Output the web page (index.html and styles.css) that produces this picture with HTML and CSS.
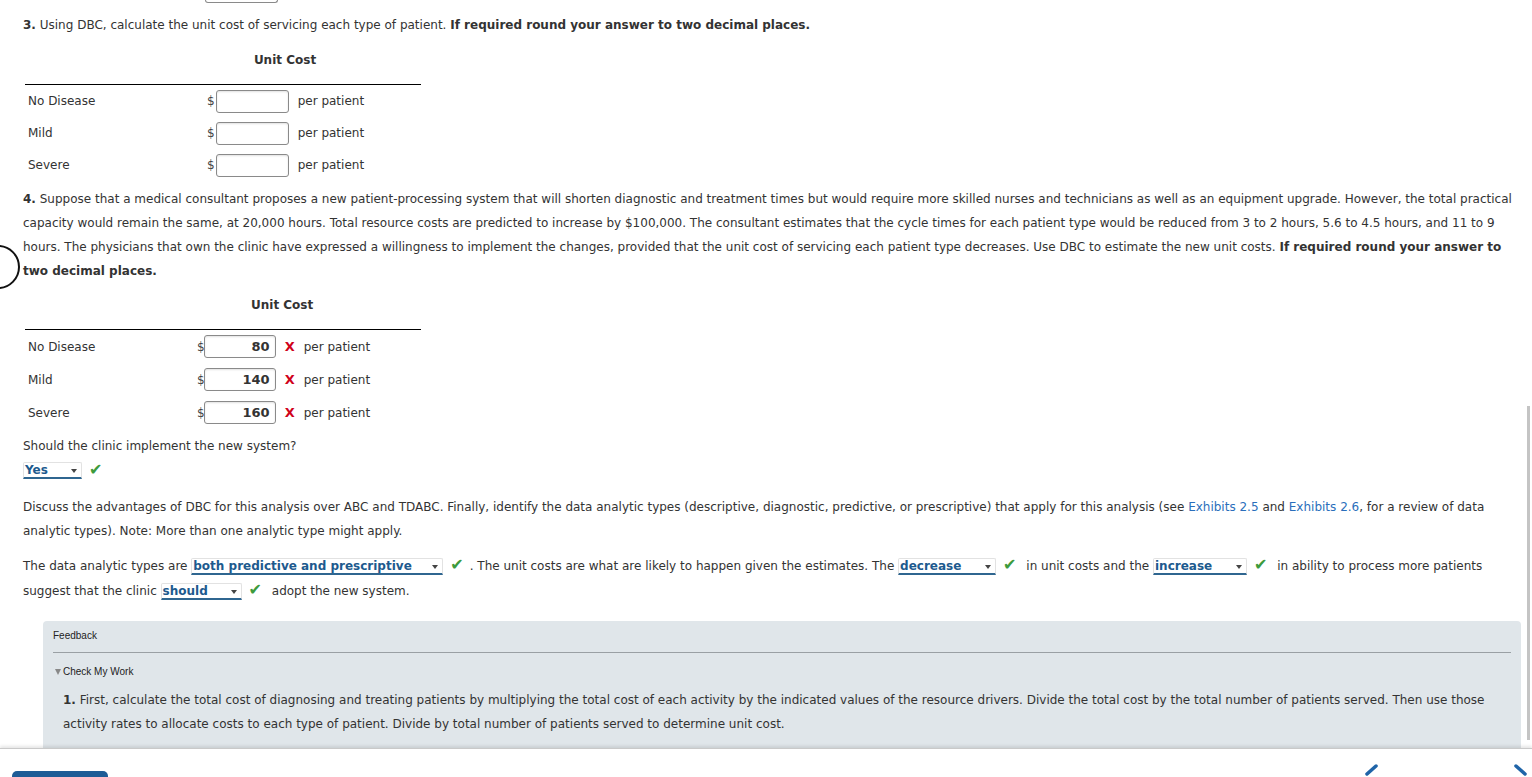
FILE: index.html
```html
<!DOCTYPE html>
<html>
<head>
<meta charset="utf-8">
<link rel="stylesheet" href="styles.css">
</head>
<body>
<div class="page">
  <div class="stub"></div>
  <div class="content">
    <p class="q q3"><b>3.</b> Using DBC, calculate the unit cost of servicing each type of patient. <b>If required round your answer to two decimal places.</b></p>

    <div class="tbl tbl1">
      <div class="th-empty"></div>
      <div class="th">Unit Cost</div>
      <div class="th-empty"></div>

      <div class="lbl">No Disease</div>
      <div class="cost"><span class="dollar">$</span><span class="inp"></span><span class="per">per patient</span></div>
      <div></div>
      <div class="lbl">Mild</div>
      <div class="cost"><span class="dollar">$</span><span class="inp"></span><span class="per">per patient</span></div>
      <div></div>
      <div class="lbl">Severe</div>
      <div class="cost"><span class="dollar">$</span><span class="inp"></span><span class="per">per patient</span></div>
      <div></div>
    </div>

    <p class="q q4"><b>4.</b> Suppose that a medical consultant proposes a new patient-processing system that will shorten diagnostic and treatment times but would require more skilled nurses and technicians as well as an equipment upgrade. However, the total practical capacity would remain the same, at 20,000 hours. Total resource costs are predicted to increase by $100,000. The consultant estimates that the cycle times for each patient type would be reduced from 3 to 2 hours, 5.6 to 4.5 hours, and 11 to 9 hours. The physicians that own the clinic have expressed a willingness to implement the changes, provided that the unit cost of servicing each patient type decreases. Use DBC to estimate the new unit costs. <b>If required round your answer to two decimal places.</b></p>

    <div class="tbl tbl2">
      <div class="th-empty"></div>
      <div class="th">Unit Cost</div>
      <div class="th-empty"></div>

      <div class="lbl">No Disease</div>
      <div class="cost"><span class="dollar">$</span><span class="inp val">80</span><span class="x">X</span><span class="per">per patient</span></div>
      <div></div>
      <div class="lbl">Mild</div>
      <div class="cost"><span class="dollar">$</span><span class="inp val">140</span><span class="x">X</span><span class="per">per patient</span></div>
      <div></div>
      <div class="lbl">Severe</div>
      <div class="cost"><span class="dollar">$</span><span class="inp val">160</span><span class="x">X</span><span class="per">per patient</span></div>
      <div></div>
    </div>

    <p class="q should">Should the clinic implement the new system?</p>
    <p class="q yes"><span class="dd dd-yes">Yes</span><span class="chk">✔</span></p>

    <p class="q discuss">Discuss the advantages of DBC for this analysis over ABC and TDABC. Finally, identify the data analytic types (descriptive, diagnostic, predictive, or prescriptive) that apply for this analysis (see <span class="link">Exhibits 2.5</span> and <span class="link">Exhibits 2.6</span>, for a review of data analytic types). Note: More than one analytic type might apply.</p>

    <p class="q data">The data analytic types are <span class="dd dd-both">both predictive and prescriptive</span><span class="chk">✔</span>. The unit costs are what are likely to happen given the estimates. The <span class="dd dd-dec">decrease</span><span class="chk">✔</span> in unit costs and the <span class="dd dd-inc">increase</span><span class="chk">✔</span> in ability to process more patients suggest that the clinic <span class="dd dd-should">should</span><span class="chk">✔</span> adopt the new system.</p>

    <div class="feedback">
      <div class="fb-title">Feedback</div>
      <div class="fb-check"><span class="tri"></span>Check My Work</div>
      <p class="fb-text"><b>1.</b> First, calculate the total cost of diagnosing and treating patients by multiplying the total cost of each activity by the indicated values of the resource drivers. Divide the total cost by the total number of patients served. Then use those activity rates to allocate costs to each type of patient. Divide by total number of patients served to determine unit cost.</p>
    </div>
  </div>
  <div class="ring"></div>
  <div class="scroll-thumb"></div>
</div>
<div class="footer">
  <div class="blue-btn"></div>
  <div class="navs">
    <svg class="chev" width="18" height="14" viewBox="0 0 18 14"><path d="M14 2 L5 10" stroke="#1f64a8" stroke-width="3.5" fill="none" stroke-linecap="round"/></svg>
    <svg class="chev chev-r" width="18" height="14" viewBox="0 0 18 14"><path d="M4 2 L13 10" stroke="#1f64a8" stroke-width="3.5" fill="none" stroke-linecap="round"/></svg>
  </div>
</div>
</body>
</html>
```

FILE: styles.css
```css
html, body {
  margin: 0;
  padding: 0;
  background: #fff;
  overflow: hidden;
}
body {
  width: 1532px;
  height: 777px;
  font-family: "DejaVu Sans", Verdana, sans-serif;
  font-size: 12px;
  color: #333;
}
.page {
  position: relative;
  height: 748px;
  overflow: hidden;
}
.stub {
  margin-left: 205px;
  width: 71px;
  height: 2px;
  border: 1px solid #8a8a8a;
  border-top: none;
  border-radius: 0 0 3px 3px;
}
.content {
  padding-left: 23px;
  width: 1499px;
}
.q {
  margin: 0;
  line-height: 24px;
}
.q3 { margin-top: 10px; }

.tbl {
  display: grid;
  margin-left: 2px;
  width: 396px;
  grid-template-rows: 37px;
  margin-top: 11px;
}
.tbl1 { grid-template-columns: 180px 160px 56px; grid-auto-rows: 32px; }
.tbl2 { grid-template-columns: 170px 200px 26px; grid-auto-rows: 33px; margin-top: 10px; }
.th, .th-empty {
  grid-row: 1;
  align-self: start;
  height: 24px;
  line-height: 24px;
  padding-bottom: 12px;
  border-bottom: 1px solid #000;
  font-weight: bold;
  text-align: center;
}
.tbl2 .th { text-align: left; padding-left: 56px; }
.lbl {
  padding-left: 3px;
  display: flex;
  align-items: center;
}
.cost {
  display: flex;
  align-items: center;
  padding-left: 2px;
  white-space: nowrap;
}
.dollar { color: #444; }
.inp {
  display: inline-block;
  box-sizing: border-box;
  width: 73px;
  height: 23px;
  border: 1px solid #8a8a8a;
  border-radius: 3px;
  box-shadow: inset 0 1px 2px rgba(0,0,0,0.12);
  background: #fff;
  margin-left: 1px;
  margin-right: 9px;
}
.tbl2 .inp {
  width: 72px;
  margin-left: -1px;
  margin-right: 0;
  text-align: right;
  font-weight: bold;
  font-size: 13px;
  line-height: 21px;
  padding-right: 5px;
  color: #333;
}
.x {
  color: #d0021b;
  font-weight: bold;
  font-size: 13px;
  margin-left: 9px;
  margin-right: 9px;
}

.q4 { margin-top: 6px; }
.should { margin-top: 5px; }
.yes {
  height: 24px;
  display: flex;
  align-items: center;
}
.discuss { margin-top: 13px; }
.data { margin-top: 11px; line-height: 25px; }

.link { color: #2a6ebb; }

.dd {
  display: inline-block;
  position: relative;
  box-sizing: border-box;
  height: 17px;
  line-height: 15px;
  font-weight: bold;
  font-size: 12px;
  color: #1d5a8e;
  padding-left: 1px;
  border: 1px solid #e2e2e2;
  border-bottom: 2px solid #2f6690;
  border-radius: 2px 2px 0 0;
  background: #fff;
  vertical-align: baseline;
}
.dd::after {
  content: "";
  position: absolute;
  right: 4px;
  top: 6px;
  border-left: 3px solid transparent;
  border-right: 3px solid transparent;
  border-top: 4px solid #444;
}
.dd-yes { width: 59px; }
.dd-both { width: 252px; }
.dd-dec { width: 98px; }
.dd-inc { width: 94px; }
.dd-should { width: 81px; }
.chk {
  color: #3d9b3d;
  font-size: 16px;
  line-height: 10px;
  margin-left: 7px;
  margin-right: 6px;
}

.feedback {
  margin-top: 17px;
  margin-left: 20px;
  width: 1478px;
  box-sizing: border-box;
  background: #e0e6ea;
  border-radius: 4px;
  padding: 0 10px 24px 10px;
  height: 140px;
}
.fb-title {
  font-family: "Liberation Sans", Arial, sans-serif;
  font-size: 10px;
  color: #222;
  height: 31px;
  line-height: 30px;
  border-bottom: 1px solid #9aa0a4;
}
.fb-check {
  font-family: "Liberation Sans", Arial, sans-serif;
  font-size: 10px;
  color: #222;
  margin-top: 10px;
  line-height: 18px;
  display: flex;
  align-items: center;
}
.tri {
  display: inline-block;
  border-left: 3px solid transparent;
  border-right: 3px solid transparent;
  border-top: 6px solid #888;
  margin: 0 2px 0 2px;
}
.fb-text {
  margin: 7px 0 0 10px;
  line-height: 24px;
  color: #333;
}

.ring {
  position: absolute;
  left: -24px;
  top: 245px;
  width: 40px;
  height: 40px;
  border: 2px solid #111;
  border-radius: 50%;
}
.scroll-thumb {
  position: absolute;
  right: 2px;
  top: 406px;
  width: 3px;
  height: 334px;
  background: #c4c4c4;
}

.footer {
  position: relative;
  height: 29px;
  border-top: 1px solid #c9c9c9;
  box-shadow: 0 -2px 3px rgba(0,0,0,0.10);
  background: #fff;
  display: flex;
  align-items: flex-end;
  justify-content: space-between;
}
.blue-btn {
  margin-left: 12px;
  width: 96px;
  height: 7px;
  background: #1d5c96;
  border-radius: 5px 5px 0 0;
}
.navs {
  display: flex;
  gap: 132px;
  margin-right: 2px;
}
.chev { display: block; }
```
